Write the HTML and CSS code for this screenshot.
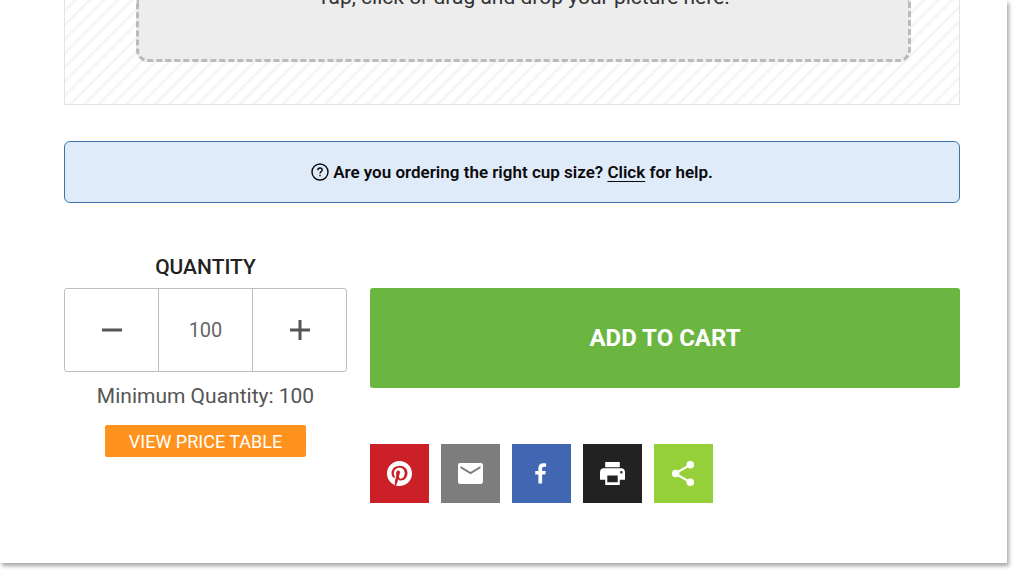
FILE: index.html
```
<!DOCTYPE html>
<html lang="en">
<head>
  <meta charset="UTF-8" />
  <meta name="viewport" content="width=device-width, initial-scale=1">
  <title>Custom Cups</title>
  <link rel="stylesheet" href="styles.css">
</head>
<body>
  <main class="page">
    <section class="upload">
      <div class="dropzone">
        <p>Tap, click or drag and drop your picture here.</p>
      </div>
    </section>

    <div class="notice">
      <svg class="help-icon" viewBox="0 0 18 18" aria-hidden="true">
        <circle cx="9" cy="9" r="8"/>
        <path d="M6.800 7.200c0-1.300 1-2.200 2.200-2.200s2.200.9 2.200 2c0 1.600-2.200 1.700-2.200 3.500M9 11.800v1.500"/>
      </svg>
      <p>Are you ordering the right cup size? <a href="#">Click</a> for help.</p>
    </div>

    <section class="order">
      <div class="quantity">
        <label for="qty">QUANTITY</label>
        <div class="stepper">
          <button type="button" aria-label="Decrease quantity">
            <svg viewBox="0 0 20 20"><path d="M0 8.500h20v3H0z"/></svg>
          </button>
          <input type="text" id="qty" value="100" />
          <button type="button" aria-label="Increase quantity">
            <svg viewBox="0 0 20 20"><path d="M0 8.500h8.500V0h3v8.500H20v3h-8.500V20h-3v-8.500H0z"/></svg>
          </button>
        </div>
        <p class="minimum">Minimum Quantity: 100</p>
        <button type="button" class="price-btn">VIEW PRICE TABLE</button>
      </div>

      <div class="actions">
        <button type="button" class="cart-btn">ADD TO CART</button>
        <div class="share">
          <a href="#" class="pinterest" aria-label="Pinterest">
            <svg viewBox="0 0 24 24"><path d="M12 0C5.370 0 0 5.370 0 12c0 5.080 3.160 9.420 7.630 11.170-.1-.95-.2-2.400.04-3.440.22-.94 1.410-5.960 1.410-5.960s-.36-.72-.36-1.780c0-1.670.97-2.910 2.170-2.910 1.020 0 1.520.77 1.520 1.690 0 1.030-.65 2.570-.99 3.990-.28 1.190.6 2.160 1.770 2.160 2.130 0 3.770-2.250 3.770-5.490 0-2.870-2.060-4.880-5.010-4.880-3.410 0-5.410 2.560-5.410 5.200 0 1.030.4 2.130.89 2.730.1.120.11.220.08.350l-.33 1.360c-.05.22-.17.27-.4.16-1.500-.7-2.430-2.890-2.430-4.650 0-3.780 2.750-7.260 7.930-7.260 4.160 0 7.400 2.970 7.400 6.930 0 4.140-2.610 7.460-6.230 7.460-1.210 0-2.360-.63-2.750-1.380l-.75 2.850c-.27 1.040-1 2.350-1.490 3.150 1.120.35 2.310.53 3.550.53 6.630 0 12-5.370 12-12S18.630 0 12 0z"/></svg>
          </a>
          <a href="#" class="email" aria-label="Email">
            <svg viewBox="0 0 24 24"><path d="M22 2H2C.9 2 0 2.900 0 4v16c0 1.100.9 2 2 2h20c1.100 0 2-.9 2-2V4c0-1.100-.9-2-2-2zm-.4 5L12 12.800 2.400 7V4.800l9.600 5.800 9.600-5.800z"/></svg>
          </a>
          <a href="#" class="facebook" aria-label="Facebook">
            <svg viewBox="0 0 24 24"><path d="M9 21.500V13H6V9.500h3V7c0-3 1.800-4.800 4.500-4.800 1.300 0 2.500.1 2.900.2v3.200h-2c-1.500 0-1.800.7-1.800 1.800v2.100h3.500l-.5 3.500h-3v8.500z"/></svg>
          </a>
          <a href="#" class="print" aria-label="Print">
            <svg viewBox="0 0 24 24"><path d="M19 1H5v5h14zM20.500 7h-17C1.500 7 0 8.500 0 10.500V18h5v5h14v-5h5v-7.500C24 8.500 22.500 7 20.500 7zM17 20.500H7V14h10zM20.500 12a1.200 1.200 0 1 1 0-2.400 1.200 1.200 0 0 1 0 2.400z"/></svg>
          </a>
          <a href="#" class="more" aria-label="Share">
            <svg viewBox="0 0 24 24"><path d="M4 12 18 4M4 12l14 8" fill="none" stroke="#fff" stroke-width="2"/><circle cx="4.500" cy="12" r="3.600"/><circle cx="18.500" cy="3.700" r="3.600"/><circle cx="18.500" cy="20.300" r="3.600"/></svg>
          </a>
        </div>
      </div>
    </section>
  </main>
</body>
</html>
```
FILE: styles.css
```
* {
  box-sizing: border-box;
}

body {
  font-family: Roboto, "Liberation Sans", sans-serif;
  background: #fff;
  margin: 0;
  color: #333;
}

p {
  margin: 0;
}

button,
input {
  font-family: inherit;
}

button {
  border: none;
  cursor: pointer;
}

.page {
  margin: 0 17px 24px 0;
  padding: 0 47px 60px 64px;
  background: #fff;
  box-shadow: 2px 3px 4px rgba(0, 0, 0, 0.35);
}

.upload {
  padding: 0 48px 42px 71px;
  border: 1px solid #e3e3e3;
  border-top: none;
  background: repeating-linear-gradient(-45deg, #fff 0, #fff 6px, #f4f4f4 8px, #f4f4f4 9px, #fff 10px);
}

.dropzone {
  height: 62px;
  overflow: hidden;
  border: 3px dashed #bbb;
  border-top: none;
  border-radius: 0 0 12px 12px;
  background: #ededed;
  text-align: center;
}

/* the prompt runs up past the top edge */
.dropzone p {
  margin-top: -16px;
  font-size: 21px;
  line-height: 26px;
}

.notice {
  display: flex;
  justify-content: center;
  align-items: center;
  gap: 4px;
  margin-top: 36px;
  min-height: 62px;
  border: 1px solid #3d74b0;
  border-radius: 6px;
  background: #e0ebfa;
  color: #0a0a0a;
  font-size: 17px;
  font-weight: 600;
}

.notice a {
  color: inherit;
  text-underline-offset: 3px;
}

.help-icon {
  width: 18px;
  height: 18px;
  fill: none;
  stroke: #0a0a0a;
  stroke-width: 1.4;
}

.order {
  display: grid;
  grid-template-columns: 283px 1fr;
  gap: 23px;
  margin-top: 51px;
}

.quantity {
  display: flex;
  flex-direction: column;
  align-items: center;
}

.quantity label {
  color: #222;
  font-size: 21px;
  font-weight: 500;
  line-height: 26px;
}

.stepper {
  display: grid;
  grid-template-columns: 1fr 95px 1fr;
  width: 100%;
  height: 84px;
  margin-top: 8px;
  border: 1px solid #bdbdbd;
  border-radius: 3px;
}

.stepper button {
  display: flex;
  justify-content: center;
  align-items: center;
  padding: 0;
  background: none;
}

.stepper svg {
  width: 20px;
  height: 20px;
  fill: #555;
}

.stepper input {
  width: 100%;
  padding: 0;
  border: solid #bdbdbd;
  border-width: 0 1px;
  background: none;
  color: #666;
  font-size: 20px;
  text-align: center;
}

.minimum {
  margin-top: 11px;
  color: #555;
  font-size: 21px;
  line-height: 26px;
}

.price-btn {
  width: 201px;
  height: 32px;
  margin-top: 16px;
  padding: 0;
  border-radius: 2px;
  background: #ff931e;
  color: #fff;
  font-size: 18px;
}

.actions {
  padding-top: 34px;
}

.cart-btn {
  width: 100%;
  height: 100px;
  border-radius: 3px;
  background: #6bb541;
  color: #fff;
  font-size: 24px;
  font-weight: 700;
}

.share {
  display: flex;
  gap: 12px;
  margin-top: 56px;
}

.share a {
  display: flex;
  justify-content: center;
  align-items: center;
  width: 59px;
  height: 59px;
}

.share svg {
  width: 25px;
  height: 25px;
  fill: #fff;
}

.pinterest {
  background: #cb2027;
}

.email {
  background: #7d7d7d;
}

.facebook {
  background: #4267b2;
}

.print {
  background: #222;
}

.more {
  background: #95d03a;
}
```
